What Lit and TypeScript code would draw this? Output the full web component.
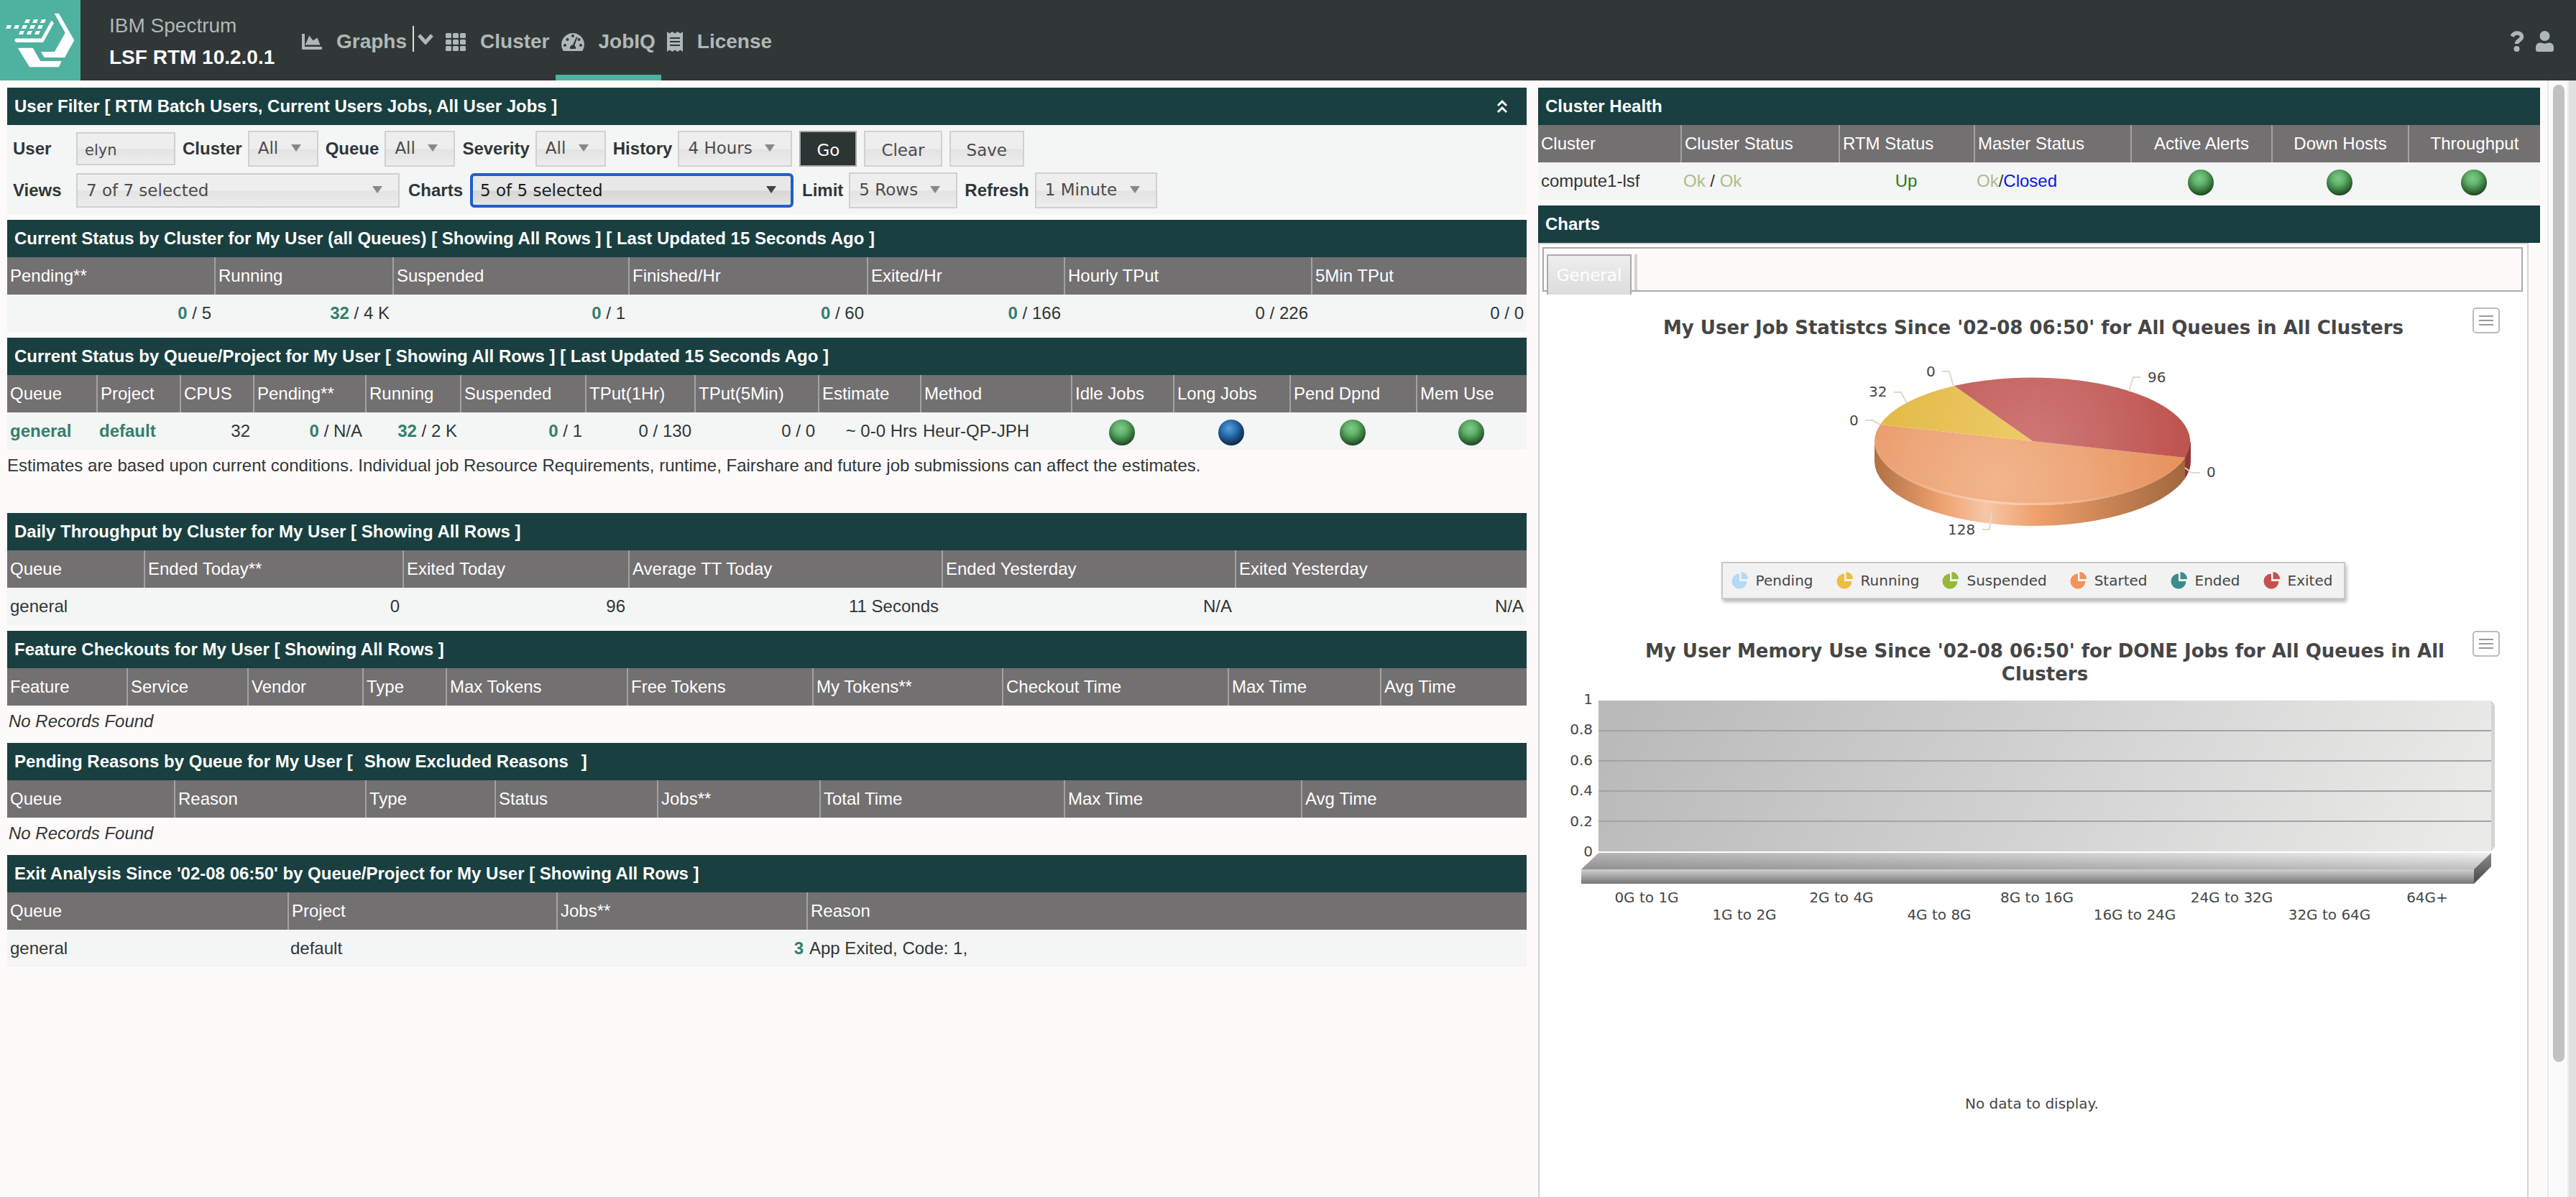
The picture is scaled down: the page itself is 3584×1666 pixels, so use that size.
import { LitElement, html, svg, css, nothing, TemplateResult } from "lit";
import { customElement, state } from "lit/decorators.js";
import { classMap } from "lit/directives/class-map.js";

type Cell = string | TemplateResult;
type Align = "left" | "right" | "center";

interface Column {
  label: string;
  share: number;
  align?: Align;
  headAlign?: Align;
}

interface Panel {
  title: Cell;
  columns: Column[];
  row?: Cell[];
  note?: string;
}

const orb = (color: "green" | "blue", label: string) =>
  html`<span class="orb ${color}" role="img" aria-label=${label}></span>`;

const count = (used: string, total: string) =>
  html`<a class="count" href="#jobs">${used}</a> / ${total}`;

const ICONS = {
  graphs: svg`<svg class="icon" width="28" height="22" viewBox="0 0 28 22"><path d="M0 1a1 1 0 0 1 1-1h2a1 1 0 0 1 1 1v17h23a1 1 0 0 1 1 1v2a1 1 0 0 1-1 1H1a1 1 0 0 1-1-1z"/><path d="M5 14.500 10.400 2.500 15.500 9.500 21.500 5.500 25.500 15.500H5z"/></svg>`,
  cluster: svg`<svg class="icon" width="28" height="25" viewBox="0 0 28 25">${[0, 10, 20].map((x) =>
    [0, 9, 18].map((y) => svg`<rect x=${x} y=${y} width="8" height="7" rx="1.500"/>`))}</svg>`,
  gauge: svg`<svg class="icon" width="32" height="25" viewBox="0 0 32 25"><path fill-rule="evenodd" d="M16 0a16 16 0 0 0-13.800 24 2 2 0 0 0 1.800 1h24a2 2 0 0 0 1.800-1A16 16 0 0 0 16 0zm0 2a2 2 0 1 1 0 4 2 2 0 0 1 0-4zM5 15a2 2 0 1 1 0 4 2 2 0 0 1 0-4zm3.500-8a2 2 0 1 1 0 4 2 2 0 0 1 0-4zM27 15a2 2 0 1 1 0 4 2 2 0 0 1 0-4zm-2.500-8a2 2 0 1 1 0 4 2 2 0 0 1 0-4zM21 5.200l1.500.600-4.200 11.700a3.600 3.600 0 0 1 1.500 4.500h-7.600a4 4 0 0 1 3.800-5.400z"/></svg>`,
  receipt: svg`<svg class="icon" width="22" height="28" viewBox="0 0 22 28"><path fill-rule="evenodd" d="M0 0l3.500 2.500L7.300 0 11 2.500 14.700 0l3.800 2.500L22 0v28l-3.500-2.500-3.800 2.500L11 25.500 7.300 28l-3.800-2.500L0 28zM4 8v2h14V8zm0 5v2h14v-2zm0 5v2h14v-2z"/></svg>`,
  chevron: svg`<svg class="icon" width="24" height="16" viewBox="0 0 24 16"><path d="M3 3l9 10 9-10" fill="none" stroke="currentColor" stroke-width="5"/></svg>`,
  help: svg`<svg class="icon" width="20" height="30" viewBox="0 0 20 30"><path d="M3 7.500C5 4 7.300 3 10 3c4 0 6.500 2.200 6.500 5.300 0 4.700-7 4.700-7 9.700" fill="none" stroke="currentColor" stroke-width="5.500"/><circle cx="9.500" cy="25" r="4"/></svg>`,
  user: svg`<svg class="icon" width="26" height="30" viewBox="0 0 26 30"><circle cx="12.500" cy="7" r="7"/><path d="M6 16.500h1.500a12 12 0 0 0 10 0H19c4 0 6 3 6 6.500v3a3 3 0 0 1-3 3H3a3 3 0 0 1-3-3v-3c0-3.500 2-6.500 6-6.500z"/></svg>`,
  collapse: svg`<svg class="icon" width="16" height="20" viewBox="0 0 16 20"><path d="M2 9l6-6 6 6M2 18l6-6 6 6" fill="none" stroke="currentColor" stroke-width="3"/></svg>`,
};

const LOGO = svg`<svg class="logo-mark" viewBox="0 0 112 112" aria-hidden="true">
  ${[[36, 27, 3], [10, 35, 5], [28, 43, 3]].map(([x, y, n]) =>
    Array.from({ length: n }, (_, i) => {
      const left = x + i * 11;
      return svg`<path d="M${left} ${y}h6l-2 5h-6z"/>`;
    }))}
  <path d="M22 53.500H57.500L71.500 28.500 75 32 60 59H22l-2-3z"/>
  <path d="M75.700 18.700H82L103.300 56 90 80H61.700L57 72H76L90.700 45.700z"/>
  <path d="M24.700 66.700h21L56.300 85h29.400L82 93.300H41z"/>
</svg>`;

const PANELS: Panel[] = [
  {
    title: "Current Status by Cluster for My User (all Queues) [ Showing All Rows ] [ Last Updated 15 Seconds Ago ]",
    columns: [
      { label: "Pending**", share: 288, align: "right" },
      { label: "Running", share: 248, align: "right" },
      { label: "Suspended", share: 328, align: "right" },
      { label: "Finished/Hr", share: 332, align: "right" },
      { label: "Exited/Hr", share: 274, align: "right" },
      { label: "Hourly TPut", share: 344, align: "right" },
      { label: "5Min TPut", share: 300, align: "right" },
    ],
    row: [count("0", "5"), count("32", "4 K"), count("0", "1"), count("0", "60"), count("0", "166"), "0 / 226", "0 / 0"],
  },
  {
    title: "Current Status by Queue/Project for My User [ Showing All Rows ] [ Last Updated 15 Seconds Ago ]",
    columns: [
      { label: "Queue", share: 124 },
      { label: "Project", share: 116 },
      { label: "CPUS", share: 102, align: "right" },
      { label: "Pending**", share: 156, align: "right" },
      { label: "Running", share: 132, align: "right" },
      { label: "Suspended", share: 174, align: "right" },
      { label: "TPut(1Hr)", share: 152, align: "right" },
      { label: "TPut(5Min)", share: 172, align: "right" },
      { label: "Estimate", share: 142, align: "right" },
      { label: "Method", share: 210 },
      { label: "Idle Jobs", share: 142, align: "center" },
      { label: "Long Jobs", share: 162, align: "center" },
      { label: "Pend Dpnd", share: 176, align: "center" },
      { label: "Mem Use", share: 154, align: "center" },
    ],
    row: [
      html`<a class="count" href="#general">general</a>`,
      html`<a class="count" href="#default">default</a>`,
      "32", count("0", "N/A"), count("32", "2 K"), count("0", "1"), "0 / 130", "0 / 0",
      "~ 0-0 Hrs", "Heur-QP-JPH",
      orb("green", "Idle jobs normal"), orb("blue", "Long jobs notice"),
      orb("green", "Pending dependencies normal"), orb("green", "Memory use normal"),
    ],
    note: "Estimates are based upon current conditions. Individual job Resource Requirements, runtime, Fairshare and future job submissions can affect the estimates.",
  },
  {
    title: "Daily Throughput by Cluster for My User [ Showing All Rows ]",
    columns: [
      { label: "Queue", share: 190 },
      { label: "Ended Today**", share: 360, align: "right" },
      { label: "Exited Today", share: 314, align: "right" },
      { label: "Average TT Today", share: 436, align: "right" },
      { label: "Ended Yesterday", share: 408, align: "right" },
      { label: "Exited Yesterday", share: 406, align: "right" },
    ],
    row: ["general", "0", "96", "11 Seconds", "N/A", "N/A"],
  },
  {
    title: "Feature Checkouts for My User [ Showing All Rows ]",
    columns: [
      { label: "Feature", share: 166 },
      { label: "Service", share: 168 },
      { label: "Vendor", share: 160 },
      { label: "Type", share: 116 },
      { label: "Max Tokens", share: 252 },
      { label: "Free Tokens", share: 258 },
      { label: "My Tokens**", share: 264 },
      { label: "Checkout Time", share: 314 },
      { label: "Max Time", share: 212 },
      { label: "Avg Time", share: 204 },
    ],
  },
  {
    title: html`Pending Reasons by Queue for My User [<button class="title-action" type="button">Show Excluded Reasons</button>]`,
    columns: [
      { label: "Queue", share: 232 },
      { label: "Reason", share: 266 },
      { label: "Type", share: 180 },
      { label: "Status", share: 226 },
      { label: "Jobs**", share: 226 },
      { label: "Total Time", share: 340 },
      { label: "Max Time", share: 330 },
      { label: "Avg Time", share: 314 },
    ],
  },
  {
    title: "Exit Analysis Since '02-08 06:50' by Queue/Project for My User [ Showing All Rows ]",
    columns: [
      { label: "Queue", share: 390 },
      { label: "Project", share: 374 },
      { label: "Jobs**", share: 348, align: "right" },
      { label: "Reason", share: 1002 },
    ],
    row: ["general", "default", html`<a class="count" href="#exits">3</a>`, "App Exited, Code: 1,"],
  },
];

const HEALTH: Panel = {
  title: "Cluster Health",
  columns: [
    { label: "Cluster", share: 198 },
    { label: "Cluster Status", share: 220 },
    { label: "RTM Status", share: 188, align: "center" },
    { label: "Master Status", share: 218 },
    { label: "Active Alerts", share: 196, align: "center", headAlign: "center" },
    { label: "Down Hosts", share: 190, align: "center", headAlign: "center" },
    { label: "Throughput", share: 184, align: "center", headAlign: "center" },
  ],
  row: [
    "compute1-lsf",
    html`<span class="ok">Ok</span> / <span class="ok">Ok</span>`,
    html`<span class="up">Up</span>`,
    html`<span class="ok">Ok</span>/<span class="closed">Closed</span>`,
    orb("green", "No active alerts"), orb("green", "No down hosts"), orb("green", "Throughput normal"),
  ],
};

const LEGEND = [
  ["Pending", "#b5d8f7"],
  ["Running", "#edbd40"],
  ["Suspended", "#95b838"],
  ["Started", "#f19459"],
  ["Ended", "#3b8d8c"],
  ["Exited", "#c6504e"],
];

/* Label text, anchor and baseline relative to the pie centre, then its connector. */
const PIE_LABELS: [string, number, number, string][] = [
  ["0", -148, -90, "-126,-97 -116,-97 -110,-76"],
  ["32", -228, -62, "-193,-68 -183,-68 -175,-53"],
  ["0", -255, -22, "-233,-29 -223,-29 -212,-23"],
  ["96", 160, -82, "150,-89 140,-89 134,-69"],
  ["0", 242, 50, "233,44 221,44 212,37"],
  ["128", -118, 130, "-70,123 -60,123 -57,100"],
];

const BUCKETS = ["0G to 1G", "1G to 2G", "2G to 4G", "4G to 8G", "8G to 16G", "16G to 24G", "24G to 32G", "32G to 64G", "64G+"];

@customElement("app-root")
export class AppRoot extends LitElement {
  @state() private filterOpen = true;

  static styles = css`
    :host {
      display: block;
      font-family: "Liberation Sans", Arial, Helvetica, sans-serif;
      font-size: 24px;
      line-height: 28px;
      color: #303736;
      background: #fefaf9;
    }
    * { box-sizing: border-box; }
    a { color: inherit; text-decoration: none; }
    button, input, select { font: inherit; color: inherit; margin: 0; }
    .icon { display: block; flex: none; fill: currentColor; }
    .page { display: flex; flex-direction: column; min-height: 100vh; }

    .topbar { display: flex; height: 112px; background: #303736; color: #afb8b8; }
    .logo { width: 112px; height: 112px; background: #4fb1a0; }
    .logo-mark { display: block; fill: #fff; }
    .brand { display: flex; flex-direction: column; justify-content: center; gap: 12px; width: 300px; padding: 4px 0 0 40px; font-size: 28px; line-height: 32px; }
    .brand strong { color: #fefaf9; }
    .nav { display: flex; flex: 1; font-size: 28px; font-weight: bold; }
    .nav-item { display: flex; align-items: center; gap: 20px; padding: 12px 8px 0; border-bottom: 8px solid transparent; }
    .nav-item.active { border-bottom-color: #4fb1a0; }
    .nav-more { align-self: flex-start; display: flex; align-items: center; height: 36px; margin-top: 36px; padding: 0 8px 0 4px; border: 0; border-left: 2px solid #dde0e0; background: none; }
    .tools { display: flex; align-items: center; gap: 16px; padding: 4px 30px 0 0; }
    .tools a { display: block; }

    .main { display: flex; flex: 1; }
    .left { flex: 2114 1 0; min-width: 0; padding-top: 10px; margin-left: 10px; }
    .right { flex: 1394 1 0; min-width: 0; display: flex; flex-direction: column; padding-top: 10px; margin: 0 10px 0 16px; }
    .scroll { display: flex; width: 40px; }
    .track { display: flex; flex-direction: column; width: 30px; padding: 6px 4px 0 6px; background: #fafafa; border-left: 2px solid #e8e8e8; border-right: 2px solid #ededed; }
    .thumb { flex: 1360; border-radius: 8px; background: #c1c1c1; }
    .rest { flex: 188; }
    .edge { flex: 1; background: #e1e1e1; }

    .panel { margin-bottom: 8px; }
    .title { display: flex; align-items: center; height: 52px; margin: 0; padding: 0 10px; background: #193f40; color: #fff; font-size: 24px; font-weight: bold; white-space: pre; }
    .title-action { padding: 0; margin: 0 18px 0 16px; border: 0; background: none; }
    .collapse { margin-left: auto; padding: 0 16px; border: 0; background: none; }
    table { width: 100%; border-collapse: separate; border-spacing: 0; table-layout: fixed; }
    th, td { height: 52px; padding: 0 4px; text-align: left; white-space: nowrap; }
    th { background: #737071; color: #fff; font-weight: normal; border-left: 2px solid #a3a1a2; }
    th:first-child { border-left: 0; }
    td { background: #f4f5f5; }
    td.empty { height: 44px; padding: 0 2px; background: none; font-style: italic; }
    .right-aligned { text-align: right; }
    .centered { text-align: center; }
    .count { color: #34806b; font-weight: bold; }
    .note { margin: 0; padding: 8px 0 44px; line-height: 28px; }
    .ok { color: #a9bf88; }
    .up { color: #2b7a1b; }
    .closed { color: #0b14f0; }
    .orb { display: inline-block; width: 36px; height: 36px; margin-top: 4px; border-radius: 50%; vertical-align: middle; }
    .orb.green { background: radial-gradient(circle at 45% 34%, #7fca88 0%, #62b26c 28%, #3f8547 50%, #1c4220 78%); }
    .orb.blue { background: radial-gradient(circle at 42% 34%, #5a9fd4 0%, #2f78b8 28%, #1d5083 50%, #0b2440 78%); }

    .filters { display: flex; flex-direction: column; gap: 8px; padding: 8px; background: #f4f5f5; }
    .filter-row { display: flex; align-items: center; gap: 10px; height: 50px; }
    .field { display: flex; align-items: center; gap: 8px; }
    .field label { font-weight: bold; }
    .field.lead label { width: 80px; }
    .pick { position: relative; display: block; }
    .pick::after { content: ""; position: absolute; right: 24px; top: 50%; margin-top: -6px; border: 7px solid transparent; border-top: 10px solid #888; border-bottom: 0; pointer-events: none; }
    select, .box, .btn { font-family: "DejaVu Sans", Verdana, sans-serif; font-size: 23px; color: #4c4c4c; border: 2px solid #d0d0d0; border-radius: 0; background: linear-gradient(#eeeeee 50%, #e3e3e3 52%, #ededed); }
    select { display: block; appearance: none; height: 50px; padding: 0 53px 2px 12px; outline: none; }
    .wide select { width: 450px; height: 48px; padding-bottom: 0; }
    .wide { margin-right: 2px; }
    .focused .pick { margin-left: 2px; }
    .focused select { color: #1b1b1b; border: 4px solid #205fc9; border-radius: 6px; padding-left: 10px; background: linear-gradient(#e8e8e8 50%, #d6d6d6 52%, #e3e3e3); }
    .focused .pick::after { border-top-color: #444; }
    .box { width: 138px; height: 46px; padding: 4px 10px 0; font-size: 21px; outline: none; }
    .btn { height: 50px; padding: 4px 22px 0; }
    .btn.primary { color: #fff; background: #2c3434; border-color: #aaa; }

    .charts { flex: 1; margin-right: 16px; border: 2px solid #d3d3d3; border-bottom: 0; background: #fff; font-family: "DejaVu Sans", Verdana, sans-serif; font-size: 20px; color: #464646; }
    .tabs { display: flex; align-items: flex-start; height: 62px; margin: 4px 6px 0 4px; padding: 8px 4px 0; border: 2px solid #aaa; background: #fefaf9; }
    .tab { height: 56px; width: 118px; padding: 0; border: 2px solid #aaa; border-bottom: 0; background: linear-gradient(#eee, #dcdcdc); color: #fff; font-size: 23px; text-align: center; }
    .tab-end { width: 4px; height: 50px; margin-left: 4px; background: #d3d3d3; }
    .chart { position: relative; display: flex; flex-direction: column; align-items: center; padding: 34px 0 22px; }
    .chart h3 { max-width: 1200px; margin: 0; font-size: 26px; line-height: 32px; text-align: center; }
    .chart.shifted { padding-bottom: 0; }
    .chart.shifted h3 { margin-left: 32px; }
    .menu { position: absolute; top: 22px; right: 38px; display: flex; flex-direction: column; justify-content: center; align-items: center; gap: 4px; width: 38px; height: 36px; padding: 0; border: 2px solid #bbb; border-radius: 5px; background: #fff; }
    .menu span { width: 20px; height: 2px; background: #999; }
    .plot { display: block; width: 100%; fill: #464646; }
    .pie { margin-top: 8px; }
    .link { fill: none; stroke: #dcdccb; stroke-width: 2; }
    .legend { display: flex; align-items: center; gap: 32px; height: 52px; margin: 12px 0 0; padding: 0 16px 0 12px; list-style: none; border: 2px solid #c8c8c8; background: #f2f2f2; box-shadow: 2px 4px 5px #bbb; }
    .legend li { display: flex; align-items: center; gap: 10px; }
    .legend svg { display: block; }
    .nodata { margin: 222px 0 0; text-align: center; padding-right: 4px; }
  `;

  private renderTitle(title: Cell) {
    return html`<h2 class="title"><span>${title}</span></h2>`;
  }

  private renderPanel(panel: Panel) {
    const total = panel.columns.reduce((sum, c) => sum + c.share, 0);
    const align = (a?: Align) => classMap({ "right-aligned": a === "right", centered: a === "center" });
    return html`<section class="panel">
      ${this.renderTitle(panel.title)}
      <table>
        <colgroup>${panel.columns.map((c) => html`<col style="width:${(c.share / total) * 100}%" />`)}</colgroup>
        <thead><tr>${panel.columns.map((c) => html`<th scope="col" class=${align(c.headAlign)}>${c.label}</th>`)}</tr></thead>
        <tbody>
          ${panel.row
            ? html`<tr>${panel.row.map((cell, i) => html`<td class=${align(panel.columns[i].align)}>${cell}</td>`)}</tr>`
            : html`<tr><td class="empty" colspan=${panel.columns.length}>No Records Found</td></tr>`}
        </tbody>
      </table>
      ${panel.note ? html`<p class="note">${panel.note}</p>` : nothing}
    </section>`;
  }

  private renderSelect(label: string, value: string, extra = "") {
    const id = label.toLowerCase();
    return html`<div class="field ${extra}">
      <label for=${id}>${label}</label>
      <span class="pick"><select id=${id}><option>${value}</option></select></span>
    </div>`;
  }

  private renderFilters() {
    return html`<section class="panel">
      <h2 class="title"><span>User Filter [ RTM Batch Users, Current Users Jobs, All User Jobs ]</span><button class="collapse" type="button" aria-label="Toggle filter" @click=${() => (this.filterOpen = !this.filterOpen)}>${ICONS.collapse}</button></h2>
      ${this.filterOpen
        ? html`<form class="filters" @submit=${(e: Event) => e.preventDefault()}>
            <div class="filter-row">
              <div class="field lead"><label for="user">User</label><input class="box" id="user" type="text" value="elyn" /></div>
              ${this.renderSelect("Cluster", "All")} ${this.renderSelect("Queue", "All")}
              ${this.renderSelect("Severity", "All")} ${this.renderSelect("History", "4 Hours")}
              <button class="btn primary" type="submit">Go</button>
              <button class="btn" type="button">Clear</button>
              <button class="btn" type="button">Save</button>
            </div>
            <div class="filter-row">
              ${this.renderSelect("Views", "7 of 7 selected", "lead wide")}
              ${this.renderSelect("Charts", "5 of 5 selected", "wide focused")}
              ${this.renderSelect("Limit", "5 Rows")} ${this.renderSelect("Refresh", "1 Minute")}
            </div>
          </form>`
        : nothing}
    </section>`;
  }

  private renderMenu() {
    return html`<button class="menu" type="button" aria-label="Chart menu"><span></span><span></span><span></span></button>`;
  }

  private renderPie() {
    return html`<svg class="plot pie" viewBox="0 0 1374 290" role="img" aria-label="Job statistics pie chart">
      <defs>
        <linearGradient id="wall" gradientUnits="userSpaceOnUse" x1="-220" y1="0" x2="212" y2="0">
          <stop offset="0" stop-color="#b07045" /><stop offset="0.22" stop-color="#f0a270" />
          <stop offset="0.36" stop-color="#f6c6a6" /><stop offset="0.52" stop-color="#f0a06c" />
          <stop offset="0.75" stop-color="#c98455" /><stop offset="1" stop-color="#a2673f" />
        </linearGradient>
        <radialGradient id="started" gradientUnits="userSpaceOnUse" cx="-50" cy="60" r="260">
          <stop offset="0" stop-color="#f3b58c" /><stop offset="0.5" stop-color="#eca679" /><stop offset="1" stop-color="#e6925c" />
        </radialGradient>
        <radialGradient id="exited" gradientUnits="userSpaceOnUse" cx="0" cy="0" r="220">
          <stop offset="0" stop-color="#cf7775" /><stop offset="0.5" stop-color="#c66764" /><stop offset="1" stop-color="#be524f" />
        </radialGradient>
        <radialGradient id="running" gradientUnits="userSpaceOnUse" cx="0" cy="0" r="220">
          <stop offset="0" stop-color="#edcc6a" /><stop offset="1" stop-color="#e3b947" />
        </radialGradient>
        <linearGradient id="rim" x1="0" x2="1" y1="0" y2="0">
          <stop offset="0.05" stop-color="#f6c6a6" stop-opacity="0" /><stop offset="0.36" stop-color="#f9d2b8" />
          <stop offset="0.8" stop-color="#f6c6a6" stop-opacity="0" />
        </linearGradient>
      </defs>
      <g transform="translate(686 134)">
        <path d="M220 0V28A220 90 0 0 1 212 52V23z" fill="#8f3634" />
        <path d="M-220 0V28A220 90 0 0 0 212 52V23A220 90 0 0 1 -220 0z" fill="url(#wall)" />
        <path d="M0 0L-212 -23A220 90 0 0 0 -220 0A220 90 0 0 0 212 23z" fill="url(#started)" />
        <path d="M0 0L-212 -23A220 89 0 0 1 -109 -77z" fill="url(#running)" />
        <path d="M0 0L-109 -77A220 89 0 0 1 212 23z" fill="url(#exited)" />
        <path d="M-212 20A220 90 0 0 0 212 23" fill="none" stroke="url(#rim)" stroke-width="3" />
        ${PIE_LABELS.map(([text, x, y, points]) => svg`<polyline class="link" points=${points} /><text x=${x} y=${y}>${text}</text>`)}
      </g>
    </svg>`;
  }

  private renderMemory() {
    return html`<svg class="plot" viewBox="0 0 1374 346" role="img" aria-label="Memory use column chart">
      <defs>
        <linearGradient id="back" gradientUnits="userSpaceOnUse" x1="100" y1="-100" x2="1100" y2="400">
          <stop offset="0" stop-color="#bababa" /><stop offset="1" stop-color="#eaeae9" />
        </linearGradient>
        <linearGradient id="floor" x1="0" x2="1" y1="0" y2="0">
          <stop offset="0" stop-color="#b4b4b4" /><stop offset="1" stop-color="#efefef" />
        </linearGradient>
        <linearGradient id="shade" x1="0" x2="0" y1="0" y2="1">
          <stop offset="0" stop-color="#000" stop-opacity="0" /><stop offset="1" stop-color="#000" stop-opacity="0.2" />
        </linearGradient>
        <linearGradient id="front" x1="0" x2="0" y1="0" y2="1">
          <stop offset="0" stop-color="#d0d0d0" /><stop offset="1" stop-color="#767676" />
        </linearGradient>
        <linearGradient id="side" x1="0" x2="0" y1="0" y2="1">
          <stop offset="0" stop-color="#8c8c8c" /><stop offset="1" stop-color="#484848" />
        </linearGradient>
      </defs>
      <g transform="translate(82 21)">
        <path d="M1242 0l5 7v196l-5 7z" fill="#d4d4d4" />
        <rect width="1242" height="210" fill="url(#back)" />
        ${[41, 83, 125, 167].map((y) => svg`<rect y=${y} width="1242" height="2" fill="#a3a3a3" />`)}
        <path d="M0 212H1242L1218 235H-24z" fill="url(#floor)" />
        <path d="M0 212H1242L1218 235H-24z" fill="url(#shade)" />
        <rect x="-24" y="235" width="1242" height="20" fill="url(#front)" />
        <path d="M1242 212v19l-24 24v-20z" fill="url(#side)" />
        ${["1", "0.8", "0.6", "0.4", "0.2", "0"].map((t, i) => svg`<text x="-8" y=${5 + Math.round(i * 42.4)} text-anchor="end">${t}</text>`)}
        ${BUCKETS.map((t, i) => svg`<text x=${67 + Math.round(i * 135.7)} y=${i % 2 ? 305 : 281} text-anchor="middle">${t}</text>`)}
      </g>
    </svg>`;
  }

  private renderCharts() {
    return html`
      ${this.renderTitle("Charts")}
      <div class="charts">
        <div class="tabs" role="tablist">
          <button class="tab" role="tab" aria-selected="true" type="button">General</button><span class="tab-end"></span>
        </div>
        <section class="chart">
          <h3>My User Job Statistcs Since '02-08 06:50' for All Queues in All Clusters</h3>
          ${this.renderMenu()} ${this.renderPie()}
          <ul class="legend">
            ${LEGEND.map(([name, color]) => html`<li>
              <svg width="24" height="24" viewBox="0 0 24 24" fill=${color} aria-hidden="true">
                <path d="M11 2.500A10.500 10.500 0 1 0 21.500 13H11z" /><path d="M13.500 0A9.500 9.500 0 0 1 23 10H13.500z" />
              </svg>${name}</li>`)}
          </ul>
        </section>
        <section class="chart shifted">
          <h3>My User Memory Use Since '02-08 06:50' for DONE Jobs for All Queues in All Clusters</h3>
          ${this.renderMenu()} ${this.renderMemory()}
        </section>
        <p class="nodata">No data to display.</p>
      </div>`;
  }

  render() {
    return html`<div class="page">
      <header class="topbar">
        <a class="logo" href="#home" aria-label="Home">${LOGO}</a>
        <div class="brand"><span>IBM Spectrum</span><strong>LSF RTM 10.2.0.1</strong></div>
        <nav class="nav">
          <a class="nav-item" href="#graphs">${ICONS.graphs}Graphs</a>
          <button class="nav-more" type="button" aria-label="More graphs">${ICONS.chevron}</button>
          <a class="nav-item" href="#cluster">${ICONS.cluster}Cluster</a>
          <a class="nav-item active" href="#jobiq">${ICONS.gauge}JobIQ</a>
          <a class="nav-item" href="#license">${ICONS.receipt}License</a>
        </nav>
        <div class="tools">
          <a href="#help" aria-label="Help">${ICONS.help}</a>
          <a href="#account" aria-label="Account">${ICONS.user}</a>
        </div>
      </header>
      <main class="main">
        <div class="left">${this.renderFilters()} ${PANELS.map((p) => this.renderPanel(p))}</div>
        <div class="right">${this.renderPanel(HEALTH)} ${this.renderCharts()}</div>
        <div class="scroll" aria-hidden="true">
          <div class="track"><div class="thumb"></div><div class="rest"></div></div><div class="edge"></div>
        </div>
      </main>
    </div>`;
  }
}
